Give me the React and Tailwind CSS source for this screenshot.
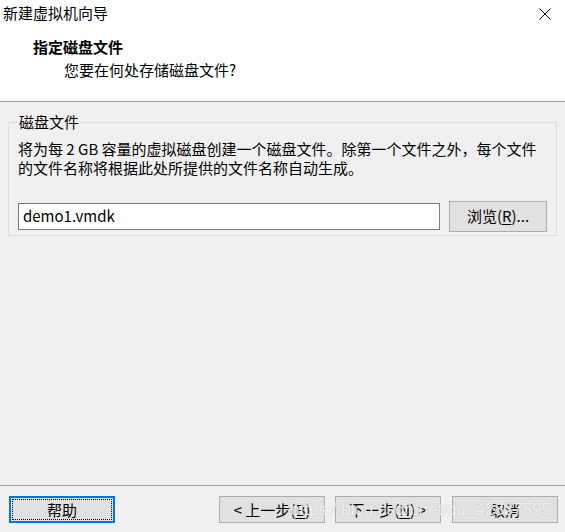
import React from "react";

const font = { fontFamily: '"Noto Sans CJK SC", "Noto Sans", sans-serif' };

function Btn({ children, className = "" }) {
  return (
    <div
      className={
        "h-[27px] w-[106px] flex items-center justify-center bg-[#e1e1e1] border border-[#adadad] text-[15px] leading-none text-black " +
        className
      }
    >
      {children}
    </div>
  );
}

export default function App() {
  return (
    <div
      className="relative w-[565px] h-[532px] bg-[#f0f0f0] flex flex-col text-black overflow-hidden"
      style={font}
    >
      {/* Header */}
      <div className="h-[102px] bg-white border-b border-[#a0a0a0] flex flex-col">
        <div className="h-[26px] flex items-center justify-between pl-[3px] pr-[14px]">
          <span className="text-[15px] leading-[20px]">新建虚拟机向导</span>
          <svg width="12" height="12" viewBox="0 0 12 12" className="mt-[1px]">
            <path d="M0.5 0.5 L11.5 11.5 M11.5 0.5 L0.5 11.5" stroke="#000" strokeWidth="1" fill="none" />
          </svg>
        </div>
        <div className="pl-[33px] mt-[11px] text-[15px] leading-[20px] font-bold">指定磁盘文件</div>
        <div className="pl-[64px] mt-[3px] text-[15px] leading-[20px]">您要在何处存储磁盘文件?</div>
      </div>

      {/* Body */}
      <div className="flex-1 px-[8px]">
        <fieldset className="mt-[10px] border border-[#dcdcdc] px-[9px] pb-[3px]">
          <legend className="px-[1px] text-[15px] leading-[20px]">磁盘文件</legend>
          <div className="mt-[7px] text-[15px] leading-[19px]">
            将为每 2 GB 容量的虚拟磁盘创建一个磁盘文件。除第一个文件之外，每个文件
            <br />
            的文件名称将根据此处所提供的文件名称自动生成。
          </div>
          <div className="mt-[24px] flex items-center gap-[9px]">
            <div className="flex-1 h-[27px] bg-white border border-[#7a7a7a] flex items-center pl-[4px] text-[15px]">
              demo1.vmdk
            </div>
            <div className="w-[98px] h-[31px] flex items-center justify-center bg-[#e1e1e1] border border-[#adadad] text-[15px]">
              浏览(<span className="underline underline-offset-2">R</span>)...
            </div>
          </div>
        </fieldset>
      </div>

      {/* Footer */}
      <div className="h-[47px] border-t border-[#a0a0a0] flex items-start pt-[10px] pl-[9px] pr-[7px]">
        <div className="relative h-[27px] w-[106px] flex items-center justify-center bg-[#e1e1e1] border-2 border-[#0078d7] text-[15px] leading-none">
          <div className="absolute inset-[1px] border border-dotted border-black" />
          帮助
        </div>
        <div className="flex-1" />
        <Btn>&lt; 上一步(<span className="underline underline-offset-2">B</span>)</Btn>
        <Btn className="ml-[10px]">下一步(<span className="underline underline-offset-2">N</span>) &gt;</Btn>
        <Btn className="ml-[11px]">取消</Btn>
      </div>

      {/* Watermark */}
      <div
        className="absolute left-[290px] top-[499px] text-[17px] leading-[22px] text-white/80 pointer-events-none whitespace-nowrap"
        style={{ fontFamily: '"Liberation Sans", Arial, sans-serif', textShadow: "0 0 1px rgba(140,140,140,0.6)" }}
      >
        https://blog.csdn.net/qq_42837595
      </div>
    </div>
  );
}
